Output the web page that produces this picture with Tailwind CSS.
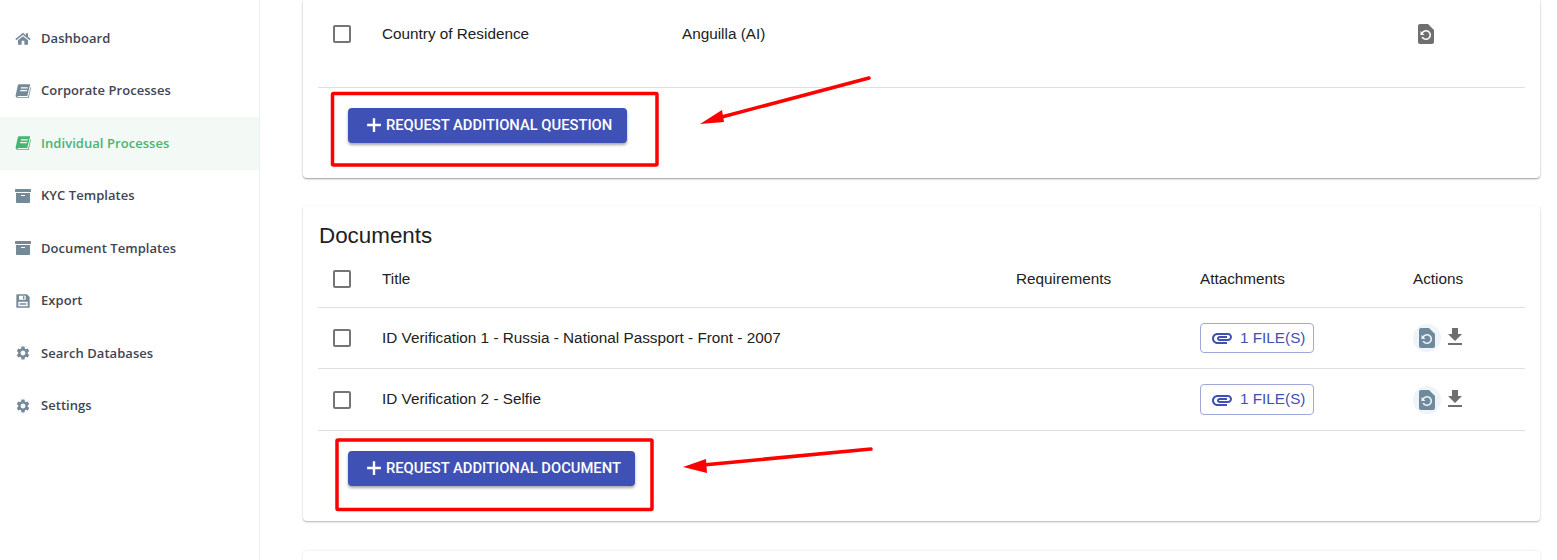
<!DOCTYPE html>
<html lang="en">
<head>
<meta charset="utf-8" />
<title>Individual Processes</title>
<script src="https://cdn.jsdelivr.net/npm/@tailwindcss/browser@4"></script>
</head>
<body class="bg-white overflow-hidden">
<svg class="hidden">
  <symbol id="i-home" viewBox="0 0 24 24"><path d="M12 4 .5 13.500l1.500 1.700L12 7l10 8.200 1.500-1.700-4-3.300V5h-3v2.700zM4.500 15.500V22H10v-6h4v6h5.500v-6.500L12 9.300z"/></symbol>
  <symbol id="i-book" viewBox="0 0 24 24"><path d="M6 2h17l-1 3-3.500 14.500H5c-1 0-1.500.6-1.300 1.200.2.500.7.800 1.500.8H19.500l1.700-7 2-8.500.8 1-3.400 15.500H4.500C2 22.500.5 20.500 1 18.500L4 4.500C4.300 3 5 2 6 2zm3 4.500-.4 1.800h10.200l.4-1.800zm-1 4-.4 1.800h10.200l.4-1.800z"/></symbol>
  <symbol id="i-archive" viewBox="0 0 512 512"><path d="M32 448c0 17.700 14.300 32 32 32h384c17.700 0 32-14.300 32-32V160H32v288zm160-212c0-6.600 5.400-12 12-12h104c6.600 0 12 5.400 12 12v8c0 6.600-5.400 12-12 12H204c-6.600 0-12-5.400-12-12v-8zM480 32H32C14.300 32 0 46.300 0 64v48c0 8.800 7.200 16 16 16h480c8.800 0 16-7.200 16-16V64c0-17.700-14.300-32-32-32z"/></symbol>
  <symbol id="i-save" viewBox="0 0 24 24"><path fill-rule="evenodd" d="M3 2h15l4 4v16H2V3a1 1 0 0 1 1-1zm3 2v6h10V4zm6 1h2v4h-2zM5 13v7h14v-7zm2 2h10v1H7zm0 2h10v1H7z"/></symbol>
  <symbol id="i-cog" viewBox="0 0 24 24"><path d="M19.140 12.940c.040-.300.060-.610.060-.940 0-.320-.020-.640-.070-.940l2.030-1.580c.180-.140.230-.410.120-.610l-1.920-3.320c-.120-.220-.370-.290-.590-.220l-2.390.960c-.500-.380-1.030-.700-1.620-.940l-.360-2.540c-.040-.240-.240-.410-.480-.410h-3.840c-.240 0-.430.170-.470.410l-.360 2.540c-.590.240-1.130.570-1.620.940l-2.390-.960c-.220-.080-.470 0-.590.220L2.740 8.870c-.120.210-.080.470.120.610l2.030 1.580c-.050.300-.090.630-.090.940s.020.640.070.940l-2.030 1.580c-.180.140-.230.410-.120.610l1.920 3.320c.120.220.370.290.590.220l2.390-.960c.500.380 1.030.700 1.620.940l.360 2.540c.050.240.240.410.480.410h3.840c.240 0 .440-.170.470-.410l.360-2.540c.590-.240 1.130-.560 1.620-.940l2.390.960c.220.080.470 0 .590-.220l1.920-3.320c.120-.220.070-.470-.12-.61l-2.010-1.580zM12 15.600c-1.980 0-3.600-1.620-3.600-3.600s1.620-3.600 3.600-3.600 3.600 1.620 3.600 3.600-1.620 3.600-3.600 3.600z"/></symbol>
  <symbol id="i-check" viewBox="0 0 24 24"><path d="M19 5v14H5V5h14m0-2H5c-1.100 0-2 .9-2 2v14c0 1.100.9 2 2 2h14c1.100 0 2-.9 2-2V5c0-1.100-.9-2-2-2z"/></symbol>
  <symbol id="i-restore" viewBox="0 0 24 24"><path d="M14 2H6c-1.100 0-1.990.9-1.990 2L4 20c0 1.100.89 2 1.990 2H18c1.100 0 2-.9 2-2V8l-6-6zm-2 16c-2.050 0-3.810-1.240-4.580-3h1.710c.63.9 1.680 1.500 2.870 1.500 1.930 0 3.500-1.570 3.500-3.500S13.930 9.500 12 9.500c-1.350 0-2.520.78-3.100 1.900l1.600 1.600h-4V9l1.300 1.300C8.690 8.920 10.230 8 12 8c2.760 0 5 2.240 5 5s-2.240 5-5 5z"/></symbol>
  <symbol id="i-download" viewBox="0 0 24 24"><path d="M19 9h-4V3H9v6H5l7 7 7-7zM5 18v2h14v-2H5z"/></symbol>
  <symbol id="i-clip" viewBox="0 0 24 24"><path d="M2 12.500C2 9.460 4.460 7 7.500 7H18c2.210 0 4 1.790 4 4s-1.790 4-4 4H9.500C8.120 15 7 13.880 7 12.500S8.120 10 9.500 10H17v2H9.410c-.55 0-.55 1 0 1H18c1.100 0 2-.9 2-2s-.9-2-2-2H7.500C5.570 9 4 10.570 4 12.500S5.570 16 7.500 16H17v2H7.500C4.460 18 2 15.540 2 12.500z"/></symbol>
  <symbol id="i-plus" viewBox="0 0 24 24"><path d="M19.500 13.300h-6.200v6.200h-2.600v-6.200H4.500v-2.600h6.200V4.500h2.600v6.200h6.200z"/></symbol>
</svg>

<div class="flex h-[560px] relative">
  <!-- Sidebar -->
  <nav class="w-[260px] shrink-0 border-r border-[#f0f0f0] pt-3 font-['Open_Sans',sans-serif] text-[13px] tracking-[0.05px] font-semibold text-[#3f4553]">
    <a class="flex items-center h-[52.5px] pl-[15px] gap-[10px]"><svg class="w-4 h-4 fill-[#748a99]"><use href="#i-home"/></svg>Dashboard</a>
    <a class="flex items-center h-[52.5px] pl-[15px] gap-[10px]"><svg class="w-4 h-4 fill-[#748a99]"><use href="#i-book"/></svg>Corporate Processes</a>
    <a class="flex items-center h-[52.5px] pl-[15px] gap-[10px] bg-[#f3f9f5] text-[#48b473]"><svg class="w-4 h-4 fill-[#48b473]"><use href="#i-book"/></svg>Individual Processes</a>
    <a class="flex items-center h-[52.5px] pl-[15px] gap-[10px]"><svg class="w-4 h-4 fill-[#748a99]"><use href="#i-archive"/></svg>KYC Templates</a>
    <a class="flex items-center h-[52.5px] pl-[15px] gap-[10px]"><svg class="w-4 h-4 fill-[#748a99]"><use href="#i-archive"/></svg>Document Templates</a>
    <a class="flex items-center h-[52.5px] pl-[15px] gap-[10px]"><svg class="w-4 h-4 fill-[#748a99]"><use href="#i-save"/></svg>Export</a>
    <a class="flex items-center h-[52.5px] pl-[15px] gap-[10px]"><svg class="w-4 h-4 fill-[#748a99]"><use href="#i-cog"/></svg>Search Databases</a>
    <a class="flex items-center h-[52.5px] pl-[15px] gap-[10px]"><svg class="w-4 h-4 fill-[#748a99]"><use href="#i-cog"/></svg>Settings</a>
  </nav>

  <!-- Main -->
  <main class="flex-1 min-w-0 pl-[43px] pr-[17px] font-['Liberation_Sans',sans-serif] text-[15.3px] text-[#212121] overflow-hidden">
    <section class="h-[178px] bg-white rounded-b shadow-[0_1px_2px_rgba(0,0,0,0.4)] px-[15px]">
      <div class="grid grid-cols-[64px_300px_731px_1fr] items-center h-[88px] pb-[20px] border-b border-[#e0e0e0]">
        <svg class="w-6 h-6 ml-3 fill-[#757575]"><use href="#i-check"/></svg>
        <span class="pt-[2px]">Country of Residence</span>
        <span class="pt-[2px]">Anguilla (AI)</span>
        <svg class="w-6 h-6 fill-[#6f6f6f] ml-[1px]"><use href="#i-restore"/></svg>
      </div>
      <div class="pl-[30px] pt-5">
        <button class="flex items-center h-[35px] w-[279px] pl-[15px] pb-[1px] gap-[1px] bg-[#3f51b5] text-white rounded shadow-[0_2px_3px_rgba(0,0,0,0.35)] font-['Roboto',sans-serif] font-medium text-[14.75px] uppercase">
          <svg class="w-[22px] h-[22px] fill-white"><use href="#i-plus"/></svg>Request additional question
        </button>
      </div>
    </section>

    <section class="mt-[28px] h-[315px] bg-white rounded shadow-[0_1px_2px_rgba(0,0,0,0.3)] px-[15px]">
      <h2 class="text-[22.4px] leading-[26px] pt-[17px] pl-[1px] h-[48px]">Documents</h2>
      <div class="grid grid-cols-[64px_634px_184px_213px_1fr] items-center h-[54px] pb-[3px] border-b border-[#e0e0e0]">
        <svg class="w-6 h-6 ml-3 fill-[#757575]"><use href="#i-check"/></svg>
        <span>Title</span>
        <span>Requirements</span>
        <span>Attachments</span>
        <span>Actions</span>
      </div>
      <div class="grid grid-cols-[64px_634px_184px_213px_1fr] items-center h-[61px] border-b border-[#e0e0e0]">
        <svg class="w-6 h-6 ml-3 fill-[#757575]"><use href="#i-check"/></svg>
        <span>ID Verification 1 - Russia - National Passport - Front - 2007</span>
        <span></span>
        <a class="flex items-center w-[114px] h-[30px] border border-[#9fa8da] rounded text-[#3f51b5] pl-[9px] gap-[6px]"><svg class="w-6 h-6 fill-[#3f51b5]"><use href="#i-clip"/></svg>1 FILE(S)</a>
        <div class="flex items-center">
          <span class="flex items-center justify-center w-7 h-7 rounded-full bg-[#eff4f9]"><svg class="w-6 h-6 fill-[#6f8a9c]"><use href="#i-restore"/></svg></span>
          <svg class="w-6 h-6 ml-[2px] mb-[2px] fill-[#6e6e6e]"><use href="#i-download"/></svg>
        </div>
      </div>
      <div class="grid grid-cols-[64px_634px_184px_213px_1fr] items-center h-[62px] border-b border-[#e0e0e0]">
        <svg class="w-6 h-6 ml-3 fill-[#757575]"><use href="#i-check"/></svg>
        <span>ID Verification 2 - Selfie</span>
        <span></span>
        <a class="flex items-center w-[114px] h-[31px] border border-[#9fa8da] rounded text-[#3f51b5] pl-[9px] gap-[6px]"><svg class="w-6 h-6 fill-[#3f51b5]"><use href="#i-clip"/></svg>1 FILE(S)</a>
        <div class="flex items-center">
          <span class="flex items-center justify-center w-7 h-7 rounded-full bg-[#eff4f9]"><svg class="w-6 h-6 fill-[#6f8a9c]"><use href="#i-restore"/></svg></span>
          <svg class="w-6 h-6 ml-[2px] mb-[2px] fill-[#6e6e6e]"><use href="#i-download"/></svg>
        </div>
      </div>
      <div class="pl-[30px] pt-5">
        <button class="flex items-center h-[35px] w-[287px] pl-[15px] pb-[1px] gap-[1px] bg-[#3f51b5] text-white rounded shadow-[0_2px_3px_rgba(0,0,0,0.35)] font-['Roboto',sans-serif] font-medium text-[14.75px] uppercase">
          <svg class="w-[22px] h-[22px] fill-white"><use href="#i-plus"/></svg>Request additional document
        </button>
      </div>
    </section>

    <section class="mt-[30px] h-[60px] bg-white rounded shadow-[0_0_3px_rgba(0,0,0,0.12)]"></section>
  </main>

  <!-- Red annotations drawn over the screenshot -->
  <svg class="absolute inset-0 w-[1557px] h-[560px] pointer-events-none" viewBox="0 0 1557 560">
    <rect x="332.500" y="93.500" width="324.500" height="71.500" fill="none" stroke="#ff0000" stroke-width="3.500" rx="1"/>
    <rect x="337" y="440" width="315" height="69.500" fill="none" stroke="#ff0000" stroke-width="3.500" rx="1"/>
    <path d="M869 78 718 118" stroke="#ff0000" stroke-width="3.500" stroke-linecap="round"/>
    <path d="M700 124 722 110 724 122z" fill="#ff0000"/>
    <path d="M871 449 703 465" stroke="#ff0000" stroke-width="3.500" stroke-linecap="round"/>
    <path d="M683 467 706 459 707 473z" fill="#ff0000"/>
  </svg>
</div>
</body>
</html>
